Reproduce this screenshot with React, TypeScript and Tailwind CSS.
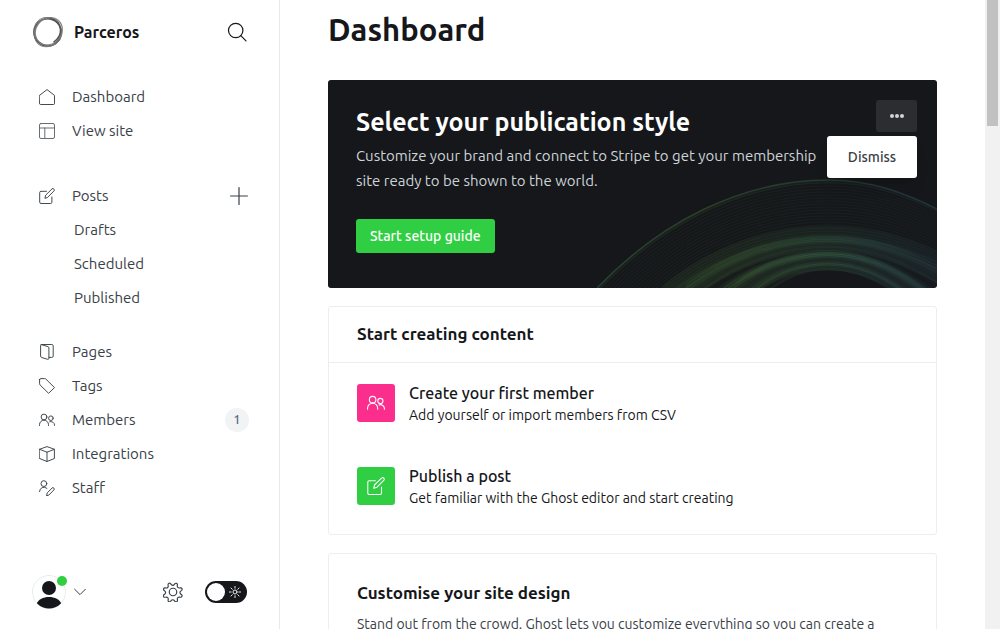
import type { ReactNode } from "react";

const stroke = {
  fill: "none",
  stroke: "currentColor",
  strokeLinecap: "round",
  strokeLinejoin: "round",
} as const;

function Icon({ children, className = "size-4" }: { children: ReactNode; className?: string }) {
  return (
    <svg viewBox="0 0 16 16" className={`shrink-0 ${className}`} aria-hidden="true" {...stroke} strokeWidth={0.95}>
      {children}
    </svg>
  );
}

const homeIcon = <path d="M.5 6.4 8 .6l7.500 5.800V14.500a1 1 0 0 1-1 1h-13a1 1 0 0 1-1-1Z" />;
const layoutIcon = (
  <g opacity=".8">
    <rect x=".5" y=".5" width="15" height="15" rx="1.500" />
    <path d="M.5 5h15M5.800 5v10.500" />
  </g>
);
const penIcon = (
  <>
    <path d="M7.500 3.300H2a1.300 1.300 0 0 0-1.300 1.300v9.600A1.300 1.300 0 0 0 2 15.500h9.600a1.300 1.300 0 0 0 1.300-1.300V9" />
    <path d="m6 10 .7-2.900L13 .9a1.200 1.200 0 0 1 1.900.2 1.200 1.200 0 0 1 .2 1.700L8.900 9.100Z" />
  </>
);
const pagesIcon = (
  <path d="m2.200.6 6.800 2c.6.2.9.6.9 1.200v10.500c0 .8-.5 1.200-1.300 1l-5.700-1.700c-.8-.2-1.300-.8-1.300-1.500V1.400c0-.6.300-.9.900-.9h10.300c.8 0 1.400.5 1.400 1.300v10.300c0 .8-.6 1.300-1.400 1.300H10" />
);
const tagIcon = <path d="M.6 1.600v4.200c0 .5.200.9.500 1.200l8.500 8.300 5.900-5.700-8.600-8.500A1.800 1.800 0 0 0 5.700.6H1.600a1 1 0 0 0-1 1Z" />;
const membersIcon = (
  <>
    <circle cx="5" cy="5" r="2.900" />
    <path d="M.5 13.500v-.8a4.500 4.500 0 0 1 9 0v.8" />
    <circle cx="11.900" cy="6.200" r="2.300" />
    <path d="M10.700 9.700a3.600 3.600 0 0 1 4.800 3.500v.3" />
  </>
);
const boxIcon = (
  <>
    <path d="M.6 3.300 8 .6l7.400 2.700v9.200L8 15.500.6 12.500Z" />
    <path d="M.6 3.300 8 6.200l7.400-2.900M8 6.200v9.300" />
  </>
);
const staffIcon = (
  <>
    <circle cx="4.900" cy="3.600" r="2.900" />
    <path d="M.5 11.600a4.500 4.500 0 0 1 7.400-3.300" />
    <path d="m7.600 15.400.6-2.500 4.800-4.800a1.200 1.200 0 0 1 1.900.1 1.200 1.200 0 0 1 .1 1.700l-4.900 4.900Z" />
  </>
);

function NavItem({ icon, label, children }: { icon: ReactNode; label: string; children?: ReactNode }) {
  return (
    <li className="flex h-[34px] items-center justify-between pl-[39px] pr-[30px]">
      <a href="#" className="flex items-center gap-[17px]">
        <Icon>{icon}</Icon>
        {label}
      </a>
      {children}
    </li>
  );
}

function Sidebar() {
  return (
    <aside className="flex w-[280px] shrink-0 flex-col border-r border-[#e6e9eb] text-[15px] text-[#394047]">
      <div className="flex h-16 shrink-0 items-center px-8 text-[#15171a]">
        <svg viewBox="0 0 32 32" className="size-8" fill="none" aria-hidden="true">
          <circle cx="15.600" cy="16.400" r="13.600" stroke="#444" strokeWidth="1.600" />
          <ellipse cx="16.800" cy="15.300" rx="14.400" ry="12.800" stroke="#888" strokeWidth="1.300" transform="rotate(-48 16.800 15.300)" />
          <ellipse cx="15.800" cy="15.700" rx="14.800" ry="13.400" stroke="#777" strokeWidth=".8" transform="rotate(55 15.800 15.700)" />
          <ellipse cx="15.500" cy="16.300" rx="14.900" ry="12.800" stroke="#777" strokeWidth=".9" transform="rotate(-65 15.500 16.300)" />
          <path d="M18 2.800c6 1 10 5 10.500 10.500.3 5-2.500 10-7 13" stroke="#555" strokeWidth="1.500" />
        </svg>
        <span className="ml-[10px] text-base font-bold">Parceros</span>
        <button type="button" aria-label="Search" className="ml-auto">
          <svg viewBox="0 0 20 20" className="size-5" aria-hidden="true" {...stroke} strokeWidth={1.200}>
            <circle cx="8.700" cy="8.500" r="7.200" />
            <path d="m13.800 13.600 5.200 5.200" />
          </svg>
        </button>
      </div>
      <nav className="pt-4">
        <ul>
          <NavItem icon={homeIcon} label="Dashboard" />
          <NavItem icon={layoutIcon} label="View site" />
        </ul>
        <ul className="mt-[31px]">
          <NavItem icon={penIcon} label="Posts">
            <button type="button" aria-label="New post">
              <svg viewBox="0 0 20 20" className="size-5" aria-hidden="true" {...stroke} strokeWidth={1.200}>
                <path d="M10 1.600v16.800M1.600 10h16.800" />
              </svg>
            </button>
          </NavItem>
          {["Drafts", "Scheduled", "Published"].map((label) => (
            <li key={label} className="flex h-[34px] items-center pl-[74px]">
              <a href="#">{label}</a>
            </li>
          ))}
        </ul>
        <ul className="mt-5">
          <NavItem icon={pagesIcon} label="Pages" />
          <NavItem icon={tagIcon} label="Tags" />
          <NavItem icon={membersIcon} label="Members">
            <span className="flex size-6 items-center justify-center rounded-full bg-[#f1f3f4] text-[13px] font-medium text-[#5d6a7c]">1</span>
          </NavItem>
          <NavItem icon={boxIcon} label="Integrations" />
          <NavItem icon={staffIcon} label="Staff" />
        </ul>
      </nav>
      <div className="mt-auto flex items-center px-8 pb-5">
        <button type="button" aria-label="Account" className="flex items-center gap-2">
          <svg viewBox="0 0 36 34" className="h-[34px] w-9" aria-hidden="true">
            <clipPath id="avatar">
              <circle cx="17" cy="17" r="16.500" />
            </clipPath>
            <circle cx="17" cy="17" r="16.500" fill="#fff" stroke="#e9ebed" />
            <g clipPath="url(#avatar)" fill="#15171a">
              <circle cx="17" cy="13" r="7" />
              <path d="M4.500 29c1.500-4.500 7-7 12.500-7s11 2.500 12.500 7v6h-25Z" />
            </g>
            <circle cx="30" cy="6" r="5" fill="#30cf43" />
          </svg>
          <svg viewBox="0 0 12 8" className="-ml-0.5 h-2 w-3" aria-hidden="true" {...stroke}>
            <path d="m.6 1.200 5.400 5.400 5.400-5.400" />
          </svg>
        </button>
        <button type="button" aria-label="Settings" className="ml-auto">
          <svg viewBox="0 0 24 24" className="size-5" aria-hidden="true" {...stroke} strokeWidth={1.400}>
            <circle cx="12" cy="12" r="4.500" />
            <path
              transform="rotate(22.500 12 12)"
              d="M13.600 1.900l.4 1.400a2.200 2.200 0 0 0 3.200 1.300l1.300-.7a1.700 1.700 0 0 1 2.300 2.300l-.7 1.300a2.200 2.200 0 0 0 1.300 3.200l1.400.4a1.700 1.700 0 0 1 0 3.200l-1.400.4a2.200 2.200 0 0 0-1.300 3.200l.7 1.300a1.700 1.700 0 0 1-2.300 2.300l-1.300-.7a2.200 2.200 0 0 0-3.200 1.300l-.4 1.400a1.700 1.700 0 0 1-3.200 0l-.4-1.400a2.200 2.200 0 0 0-3.200-1.300l-1.300.7a1.700 1.700 0 0 1-2.300-2.300l.7-1.300a2.200 2.200 0 0 0-1.300-3.200l-1.400-.4a1.700 1.700 0 0 1 0-3.200l1.400-.4a2.200 2.200 0 0 0 1.300-3.200l-.7-1.300a1.700 1.700 0 0 1 2.300-2.300l1.300.7a2.200 2.200 0 0 0 3.200-1.300l.4-1.400a1.700 1.700 0 0 1 3.200 0Z"
            />
          </svg>
        </button>
        <label className="ml-[22px] flex h-[22px] w-[42px] items-center justify-between rounded-full bg-[#15171a] pl-0.5 pr-1.5 text-white">
          <input type="checkbox" role="switch" aria-label="Night shift" className="size-[18px] appearance-none rounded-full bg-white" />
          <svg viewBox="0 0 12 12" className="size-3" aria-hidden="true" {...stroke} strokeWidth={0.9}>
            <circle cx="6" cy="6" r="2" />
            <path d="M6 .4v1.800M6 9.800v1.800M.4 6h1.800M9.800 6h1.800M2 2l1.300 1.300M8.700 8.700 10 10M2 10l1.300-1.300M8.700 3.300 10 2" />
          </svg>
        </label>
      </div>
    </aside>
  );
}

// Each arc blends between three key curves: outer rim, middle band, inner band.
// [start x, peak y, end y]
const rim = [0, 2, 31];
const middle = [80, 59, 84];
const inner = [165, 88, 146];

function arc(from: number[], to: number[], t: number) {
  const [x, peak, end] = from.map((v, i) => v + (to[i] - v) * t);
  return `M${x - 24} 138L${x} 110C${x + (231 - x) * 0.27} ${110 - (110 - peak) * 0.6} ${x + (231 - x) * 0.62} ${peak} 231 ${peak}C275 ${peak} 308 ${peak + (end - peak) * 0.45} 340 ${end}l20 12`;
}

const bandOpacity = [0.12, 0.1, 0.22, 0.16, 0.06, 0.04, 0.1, 0.05, 0.04, 0.12, 0.26, 0.3, 0.2, 0.08, 0.03, 0.06, 0.16, 0.24, 0.1, 0.04, 0.12];

function Swoosh() {
  return (
    <svg viewBox="0 0 340 110" className="pointer-events-none absolute bottom-0 right-0 h-[110px] w-[340px]" fill="none" aria-hidden="true">
      <defs>
        <linearGradient id="glow" gradientUnits="userSpaceOnUse" x1="0" y1="110" x2="340" y2="40">
          <stop offset="0" stopColor="#4f9a62" />
          <stop offset=".35" stopColor="#62a048" />
          <stop offset=".65" stopColor="#4a8a5c" />
          <stop offset="1" stopColor="#3c6c80" />
        </linearGradient>
      </defs>
      <g stroke="url(#glow)">
        <path d={arc(rim, middle, 0)} strokeWidth="1.400" opacity=".3" />
        <path d={arc(rim, middle, 0.03)} strokeWidth="3" opacity=".07" />
        {Array.from({ length: 18 }, (_, i) => (
          <path key={i} d={arc(rim, middle, (i + 1) / 19)} strokeWidth="1" opacity={0.07} />
        ))}
        <path d={arc(rim, middle, 0.92)} strokeWidth="14" opacity=".09" />
        {bandOpacity.map((opacity, i) => (
          <path key={i} d={arc(middle, inner, i / 18)} strokeWidth="2.400" opacity={opacity * 0.9} />
        ))}
        <path d={arc(middle, inner, 0.2)} strokeWidth="16" opacity=".1" />
        <path d={arc(middle, inner, 0.8)} strokeWidth="20" opacity=".1" />
      </g>
    </svg>
  );
}

function Banner() {
  return (
    <section className="relative rounded-[3px] bg-[#15171a] px-7 pb-[35px] pt-[26px]">
      <Swoosh />
      <h2 className="relative text-[25px] font-bold leading-8 text-white">Select your publication style</h2>
      <p className="relative mt-[5px] max-w-[480px] text-[15px] leading-[25px] text-[#ced4d9]">
        Customize your brand and connect to Stripe to get your membership site ready to be shown to the world.
      </p>
      <button type="button" className="relative mt-[26px] h-[34px] rounded-[3px] bg-[#30cf43] px-3.5 text-sm font-medium text-white">
        Start setup guide
      </button>
      <div className="absolute right-5 top-5 flex flex-col items-end gap-1">
        <button type="button" aria-label="More options" className="flex h-8 w-[41px] items-center justify-center gap-px rounded-[3px] bg-[#2c2d30]">
          <span className="size-1 rounded-full bg-[#ced4d9]" />
          <span className="size-1 rounded-full bg-[#ced4d9]" />
          <span className="size-1 rounded-full bg-[#ced4d9]" />
        </button>
        <button type="button" className="h-[42px] w-[90px] rounded-[3px] bg-white text-sm font-medium text-[#394047] shadow-lg">
          Dismiss
        </button>
      </div>
    </section>
  );
}

function Task({ icon, tint, title, text }: { icon: ReactNode; tint: string; title: string; text: string }) {
  return (
    <a href="#" className="flex items-start gap-3.5">
      <span className={`mt-0.5 flex size-[38px] shrink-0 items-center justify-center rounded-[3px] text-white ${tint}`}>
        <Icon className="size-[18px]">{icon}</Icon>
      </span>
      <span className="flex flex-col text-[#15171a]">
        <span className="text-base font-medium leading-[22px]">{title}</span>
        <span className="text-sm leading-[22px]">{text}</span>
      </span>
    </a>
  );
}

export default function App() {
  return (
    <div className="flex h-screen overflow-hidden bg-white font-['Ubuntu','Noto_Sans',sans-serif]">
      <Sidebar />
      <main className="min-w-0 flex-1 overflow-hidden px-12">
        <h1 className="pb-[30px] pt-2.5 text-[31px] font-bold leading-10 text-[#15171a]">Dashboard</h1>
        <div className="flex flex-col gap-[18px]">
          <Banner />
          <section className="rounded-[3px] border border-[#ebeef0]">
            <h2 className="flex h-14 items-center border-b border-[#ebeef0] px-7 pb-0.5 text-[17px] font-bold text-[#15171a]">
              Start creating content
            </h2>
            <div className="flex flex-col gap-[39px] px-7 pb-[25px] pt-[19px]">
              <Task icon={membersIcon} tint="bg-[#fb2d8d]" title="Create your first member" text="Add yourself or import members from CSV" />
              <Task icon={penIcon} tint="bg-[#30cf43]" title="Publish a post" text="Get familiar with the Ghost editor and start creating" />
            </div>
          </section>
          <section className="rounded-[3px] border border-[#ebeef0] px-7 py-7">
            <h2 className="text-[17px] font-bold leading-[22px] text-[#15171a]">Customise your site design</h2>
            <p className="mt-2 text-sm leading-[25px] text-[#394047]">
              Stand out from the crowd. Ghost lets you customize everything so you can create a
            </p>
          </section>
        </div>
      </main>
      <div className="w-[15px] shrink-0 bg-[#f1f1f1] px-0.5" aria-hidden="true">
        <div className="h-1/5 bg-[#c1c1c1]" />
      </div>
    </div>
  );
}
